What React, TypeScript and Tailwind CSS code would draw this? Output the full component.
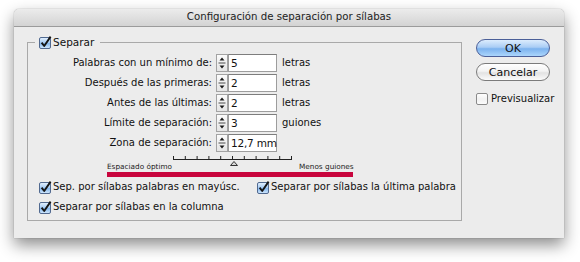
import React from "react";

function CheckBox({ checked }: { checked: boolean }) {
  return (
    <svg width="13" height="13" viewBox="0 0 13 13" className="shrink-0 block">
      <defs>
        <linearGradient id="cbOn" x1="0" y1="0" x2="0" y2="1">
          <stop offset="0" stopColor="#e6f2fe" />
          <stop offset="0.45" stopColor="#a9cdf4" />
          <stop offset="0.55" stopColor="#86b8ee" />
          <stop offset="1" stopColor="#d3e9fd" />
        </linearGradient>
        <linearGradient id="cbOff" x1="0" y1="0" x2="0" y2="1">
          <stop offset="0" stopColor="#ffffff" />
          <stop offset="0.5" stopColor="#f1f1f1" />
          <stop offset="1" stopColor="#fdfdfd" />
        </linearGradient>
      </defs>
      <rect
        x="0.5"
        y="1.5"
        width="11"
        height="11"
        rx="1.5"
        fill={checked ? "url(#cbOn)" : "url(#cbOff)"}
        stroke={checked ? "#51698f" : "#8a8a8a"}
      />
      {checked && (
        <path d="M2.6 6.6 L5.2 10 L11.6 0.6" stroke="#151515" strokeWidth="1.9" fill="none" strokeLinejoin="round" />
      )}
    </svg>
  );
}

function Spinner() {
  return (
    <svg width="12" height="18" viewBox="0 0 12 18" className="block shrink-0">
      <defs>
        <linearGradient id="spg" x1="0" y1="0" x2="0" y2="1">
          <stop offset="0" stopColor="#fbfbfb" />
          <stop offset="1" stopColor="#e4e4e4" />
        </linearGradient>
      </defs>
      <rect x="0.5" y="0.5" width="11" height="17" fill="url(#spg)" stroke="#a3a3a3" />
      <polygon points="3.5,6.5 6,3.5 8.5,6.5" fill="#1a1a1a" />
      <line x1="2.5" y1="9" x2="9.5" y2="9" stroke="#4a4a4a" strokeWidth="1" />
      <polygon points="3.5,11.5 6,14.5 8.5,11.5" fill="#1a1a1a" />
    </svg>
  );
}

function FieldRow({ label, value, unit }: { label: string; value: string; unit?: string }) {
  return (
    <div className="flex items-center h-[18px]">
      <div className="w-[184px] text-right leading-none whitespace-nowrap">{label}</div>
      <div className="ml-[4px] flex">
        <Spinner />
        <div className="w-[49px] h-[18px] bg-white border border-[#9d9d9d] border-t-[#7d7d7d] flex items-center pl-[2px] text-[10.5px] tracking-[-0.2px] leading-none whitespace-nowrap">
          {value}
        </div>
      </div>
      {unit && <div className="ml-[5px] leading-none whitespace-nowrap">{unit}</div>}
    </div>
  );
}

function Ruler() {
  const ticks = Array.from({ length: 11 }, (_, i) => 0.5 + i * 11.8);
  return (
    <svg width="120" height="10" viewBox="0 0 120 10" className="block shrink-0">
      <line x1="0" y1="3.5" x2="119" y2="3.5" stroke="#222" strokeWidth="1" />
      {ticks.map((x, i) => (
        <line key={i} x1={x} y1="0" x2={x} y2="4" stroke="#222" strokeWidth="1" />
      ))}
      <polygon points="57.5,9.5 61,5.5 64.5,9.5" fill="#d8d8d8" stroke="#333" strokeWidth="1" />
    </svg>
  );
}

export default function App() {
  return (
    <div className="w-[580px] h-[262px] bg-white pt-[9px] pl-[14px] font-['DejaVu_Sans',sans-serif] text-[10px] text-[#111] overflow-hidden">
      <div className="w-[550px] h-[229px] rounded-t-[5px] bg-[#ececec] shadow-[0_7px_16px_rgba(0,0,0,0.45),0_0_1px_rgba(0,0,0,0.5)] flex flex-col overflow-hidden">
        <div className="h-[18px] shrink-0 bg-gradient-to-b from-[#ececec] to-[#d3d3d3] border-b border-[#9b9b9b] flex items-center justify-center text-[10.2px] text-[#222] leading-none">
          Configuración de separación por sílabas
        </div>
        <div className="flex flex-1">
          <fieldset className="ml-[13px] mt-[9px] w-[435px] h-[185px] border border-[#a9a9a9] px-0 pt-[5px]">
            <legend className="ml-[7px] pl-[4px] pr-[6px] flex items-center gap-[1px] leading-none">
              <CheckBox checked />
              <span className="text-[10.5px]">Separar</span>
            </legend>
            <div className="flex flex-col gap-[2px]">
              <FieldRow label="Palabras con un mínimo de:" value="5" unit="letras" />
              <FieldRow label="Después de las primeras:" value="2" unit="letras" />
              <FieldRow label="Antes de las últimas:" value="2" unit="letras" />
              <FieldRow label="Límite de separación:" value="3" unit="guiones" />
              <FieldRow label="Zona de separación:" value="12,7 mm" />
            </div>
            <div className="flex items-end ml-[79px] mt-[4px] h-[14px]">
              <div className="w-[66px] text-[7.3px] leading-none whitespace-nowrap text-[#222]">Espaciado óptimo</div>
              <div className="self-start">
                <Ruler />
              </div>
              <div className="ml-[6px] text-[7.3px] leading-none whitespace-nowrap text-[#222]">Menos guiones</div>
            </div>
            <div className="ml-[79px] mt-[2px] w-[246px] h-[5px] bg-[#c8053d]" />
            <div className="ml-[11px] mt-[3px] flex items-center h-[14px]">
              <div className="w-[218px] flex items-center gap-[1px]">
                <CheckBox checked />
                <span className="leading-none whitespace-nowrap">Sep. por sílabas palabras en mayúsc.</span>
              </div>
              <div className="flex items-center gap-[1px]">
                <CheckBox checked />
                <span className="leading-none whitespace-nowrap">Separar por sílabas la última palabra</span>
              </div>
            </div>
            <div className="ml-[11px] mt-[6px] flex items-center h-[14px] gap-[1px]">
              <CheckBox checked />
              <span className="leading-none whitespace-nowrap">Separar por sílabas en la columna</span>
            </div>
          </fieldset>
          <div className="ml-[14px] mt-[12px] w-[74px] flex flex-col">
            <button className="h-[18px] w-[74px] rounded-full border border-[#4b5f98] bg-[linear-gradient(to_bottom,#dcecfd_0%,#aacdf5_45%,#7cb2ee_55%,#abd6fc_100%)] text-[11px] leading-none text-[#111]">
              OK
            </button>
            <button className="mt-[6px] h-[18px] w-[74px] rounded-full border border-[#7b7b7b] bg-[linear-gradient(to_bottom,#ffffff_0%,#f3f3f3_45%,#e3e3e3_55%,#fbfbfb_100%)] text-[11px] leading-none text-[#111]">
              Cancelar
            </button>
            <div className="mt-[11px] flex items-center gap-[2px]">
              <CheckBox checked={false} />
              <span className="leading-none whitespace-nowrap">Previsualizar</span>
            </div>
          </div>
        </div>
      </div>
    </div>
  );
}
